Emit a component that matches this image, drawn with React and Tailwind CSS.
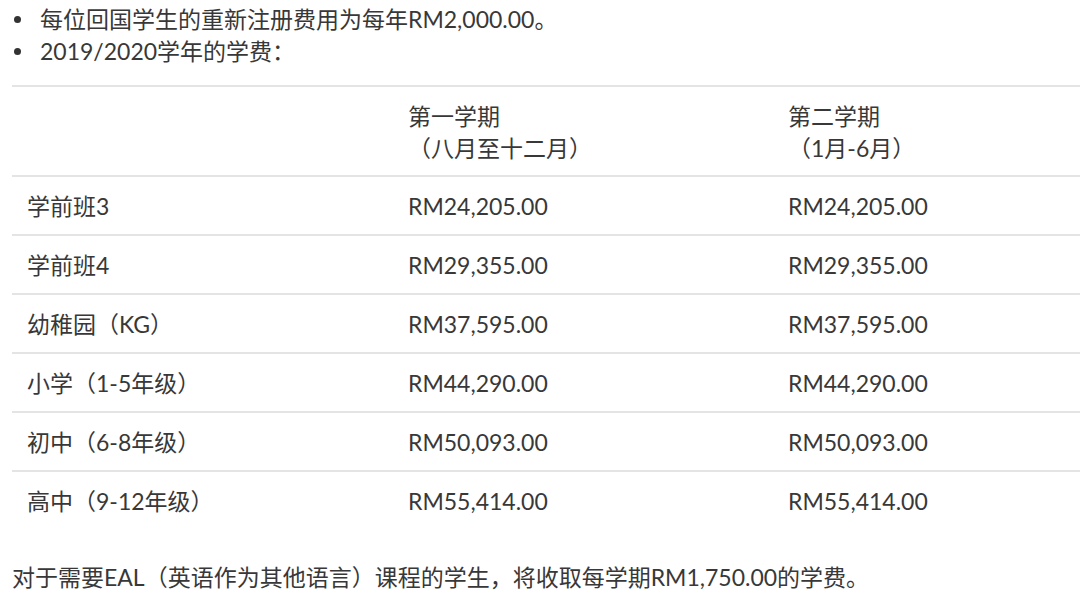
const rows = [
  ['学前班3', 'RM24,205.00', 'RM24,205.00'],
  ['学前班4', 'RM29,355.00', 'RM29,355.00'],
  ['幼稚园（KG）', 'RM37,595.00', 'RM37,595.00'],
  ['小学（1-5年级）', 'RM44,290.00', 'RM44,290.00'],
  ['初中（6-8年级）', 'RM50,093.00', 'RM50,093.00'],
  ['高中（9-12年级）', 'RM55,414.00', 'RM55,414.00'],
];

const bullets = ['每位回国学生的重新注册费用为每年RM2,000.00。', '2019/2020学年的学费：'];

export default function App() {
  return (
    <div
      className="min-h-screen bg-white pl-[12px] pt-[3px] text-[23px] leading-[32px] text-[#383838]"
      style={{ fontFamily: '"Lato", "Noto Sans CJK SC", sans-serif' }}
    >
      <ul>
        {bullets.map((b) => (
          <li key={b} className="flex items-center">
            <span className="ml-[2px] mr-[19px] h-[7px] w-[7px] rounded-full bg-[#333]" />
            <span>{b}</span>
          </li>
        ))}
      </ul>

      <div className="mt-[18px] border-t-2 border-[#e4e4e4]">
        <div className="grid grid-cols-[381px_380px_1fr] pb-[11px] pt-[13px]">
          <div className="px-[15px]" />
          <div className="px-[15px]">
            <div>第一学期</div>
            <div>（八月至十二月）</div>
          </div>
          <div className="px-[15px]">
            <div>第二学期</div>
            <div>（1月-6月）</div>
          </div>
        </div>
        {rows.map((r) => (
          <div
            key={r[0]}
            className="grid grid-cols-[381px_380px_1fr] border-t-2 border-[#e4e4e4] pb-[12px] pt-[13px]"
          >
            {r.map((c, i) => (
              <div key={i} className="px-[15px]">
                {c}
              </div>
            ))}
          </div>
        ))}
      </div>

      <p className="mt-[32px]">
        对于需要EAL（英语作为其他语言）课程的学生，将收取每学期RM1,750.00的学费。
      </p>
    </div>
  );
}
